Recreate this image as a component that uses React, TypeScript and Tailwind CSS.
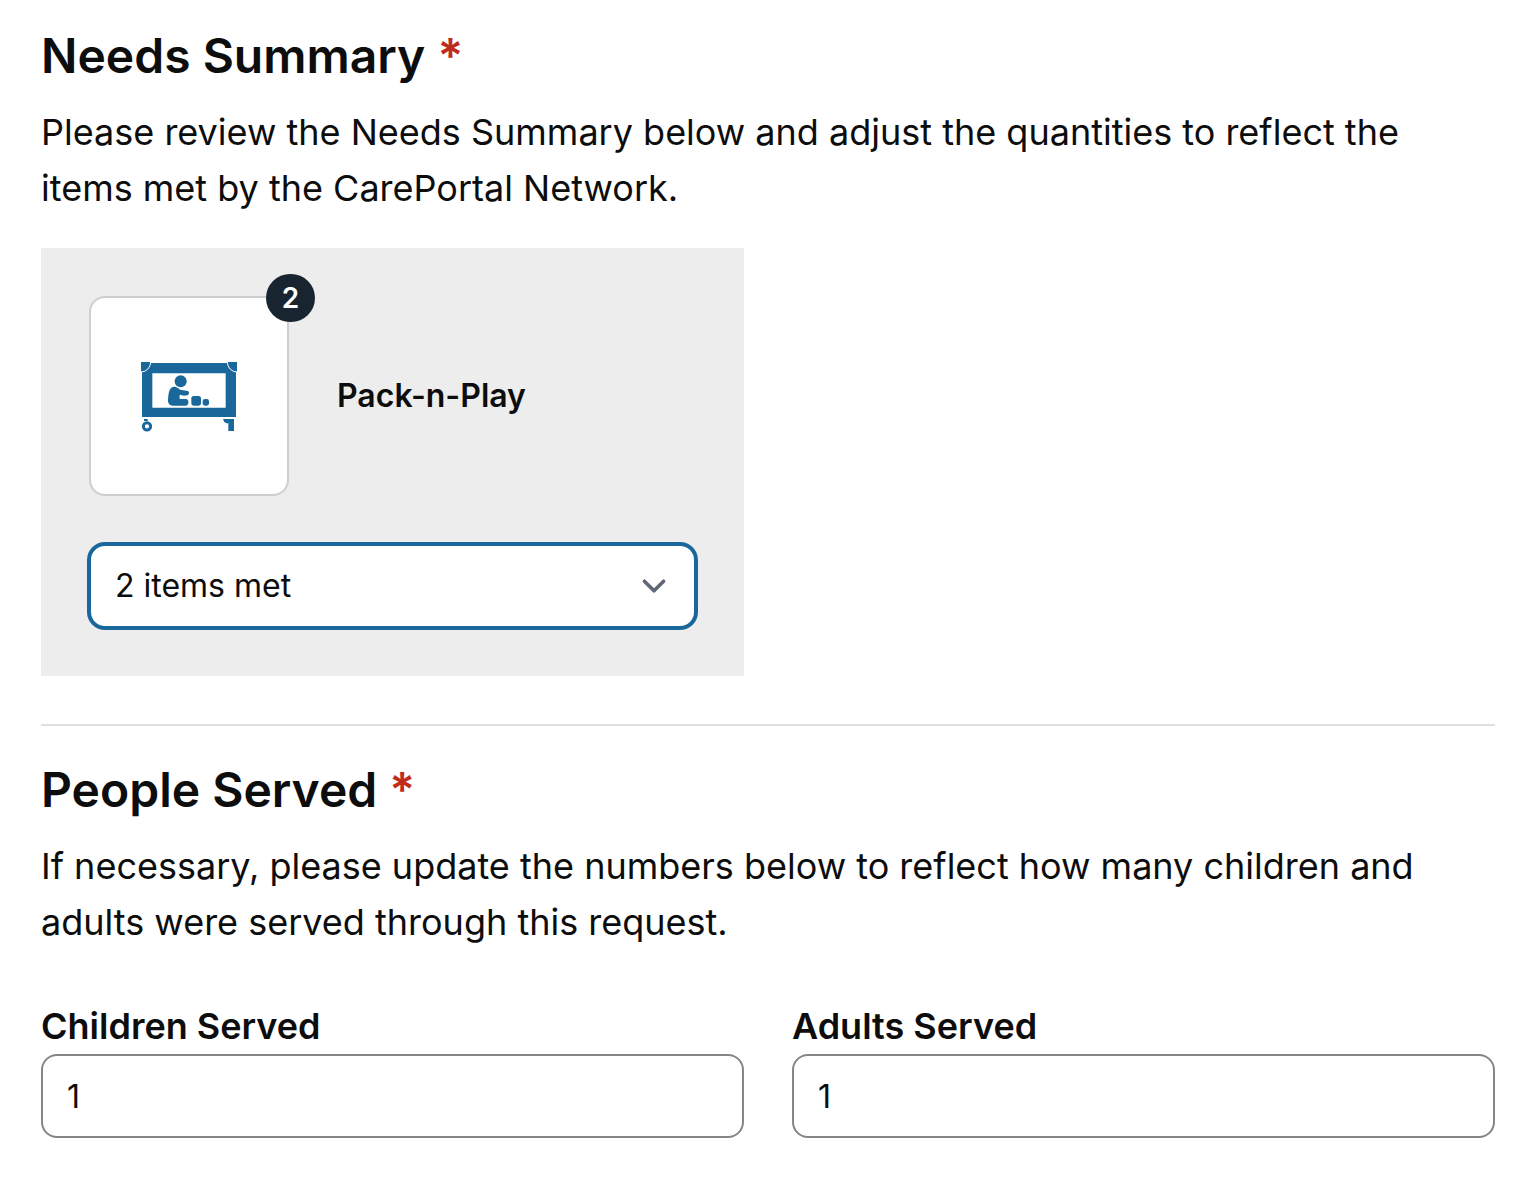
import { useState } from "react";

function PlayYardIcon() {
  return (
    <svg viewBox="33 -6 288 288" className="size-24 text-[#1a679c]" fill="currentColor" aria-hidden="true">
      {/* frame */}
      <path fillRule="evenodd" d="M36 39H318V201H36ZM67 70V173H287V70Z" />
      {/* corner caps */}
      <path d="M33 36H62A29 30 0 0 1 33 66Z" />
      <path d="M321 36H292A29 30 0 0 0 321 66Z" />
      <path d="M62 36A29 30 0 0 1 33 66M292 36A29 30 0 0 0 321 66" fill="none" stroke="#fff" strokeWidth="3" />
      {/* child */}
      <circle cx="152" cy="94" r="18" />
      <path d="M128 111C137 109 144 114 150 119L173 123C179 125 178 134 172 136L162 137L149 134V147H168C178 148 178 165 168 167H129C119 167 113 159 114 150C115 137 116 115 128 111Z" />
      {/* blocks */}
      <rect x="184" y="138" width="29" height="29" rx="7" />
      <rect x="218" y="147" width="19" height="20" rx="7" />
      {/* wheel and foot */}
      <path d="M42 207H53V213H42Z" />
      <circle cx="51" cy="229" r="11" fill="none" stroke="currentColor" strokeWidth="9" />
      <path d="M279 207H312V243H295V220H289Q281 217 279 207Z" />
    </svg>
  );
}

function SectionHeader({ title, children }: { title: string; children: string }) {
  return (
    <header className="flex flex-col gap-4">
      <h2 className="text-[48px] leading-[64px] font-semibold">
        {title} <span className="text-[#bf2c1b]">*</span>
      </h2>
      <p className="text-[36px] leading-[56px]">{children}</p>
    </header>
  );
}

function NeedCard({ name, quantity }: { name: string; quantity: number }) {
  const [met, setMet] = useState(quantity);

  return (
    <div className="flex flex-col gap-12 bg-[#ededed] p-12">
      <div className="flex items-center gap-12">
        <div className="relative flex size-[200px] shrink-0 items-center justify-center rounded-2xl border-2 border-[#cecdd1] bg-white">
          <PlayYardIcon />
          <span className="absolute -top-6 -right-7 flex h-12 w-[49px] items-center justify-center rounded-full bg-[#18242f] text-[28px] font-semibold text-white">
            {quantity}
          </span>
        </div>
        <span className="text-[32px] leading-[48px] font-semibold">{name}</span>
      </div>
      <div className="relative">
        <select
          aria-label={`${name} items met`}
          value={met}
          onChange={(e) => setMet(Number(e.target.value))}
          className="block h-[84px] w-full appearance-none rounded-2xl border-2 border-[#1a679c] bg-white px-6 text-[32px] ring-2 ring-[#1a679c] outline-none"
        >
          {Array.from({ length: quantity + 1 }, (_, n) => (
            <option key={n} value={n}>
              {n} items met
            </option>
          ))}
        </select>
        <svg
          viewBox="0 0 20 20"
          className="pointer-events-none absolute inset-y-0 right-[18px] my-auto size-12"
          fill="none"
          stroke="#5f6675"
          strokeWidth="1.5"
          strokeLinecap="round"
          strokeLinejoin="round"
          aria-hidden="true"
        >
          <path d="M6 8l4 4 4-4" />
        </svg>
      </div>
    </div>
  );
}

function CountField({ id, label }: { id: string; label: string }) {
  const [value, setValue] = useState("1");

  return (
    <div>
      <label htmlFor={id} className="block text-[36px] leading-[56px] font-semibold">
        {label}
      </label>
      <input
        id={id}
        type="text"
        inputMode="numeric"
        value={value}
        onChange={(e) => setValue(e.target.value)}
        className="block h-[84px] w-full rounded-2xl border-2 border-[#868686] bg-white px-6 text-[32px]"
      />
    </div>
  );
}

export default function App() {
  return (
    <main className="min-h-screen bg-white pt-6 pr-[43px] pb-[54px] pl-[41px] font-['Inter',sans-serif] text-[#0d0d0d]">
      <section>
        <SectionHeader title="Needs Summary">
          Please review the Needs Summary below and adjust the quantities to reflect the items met by the CarePortal Network.
        </SectionHeader>
        <div className="mt-8 grid grid-cols-2 gap-12">
          <NeedCard name="Pack-n-Play" quantity={2} />
        </div>
      </section>
      <hr className="mt-12 mb-8 border-t-2 border-[#e0e0e0]" />
      <section>
        <SectionHeader title="People Served">
          If necessary, please update the numbers below to reflect how many children and adults were served through this request.
        </SectionHeader>
        <div className="mt-12 grid grid-cols-2 gap-12">
          <CountField id="children-served" label="Children Served" />
          <CountField id="adults-served" label="Adults Served" />
        </div>
      </section>
    </main>
  );
}
